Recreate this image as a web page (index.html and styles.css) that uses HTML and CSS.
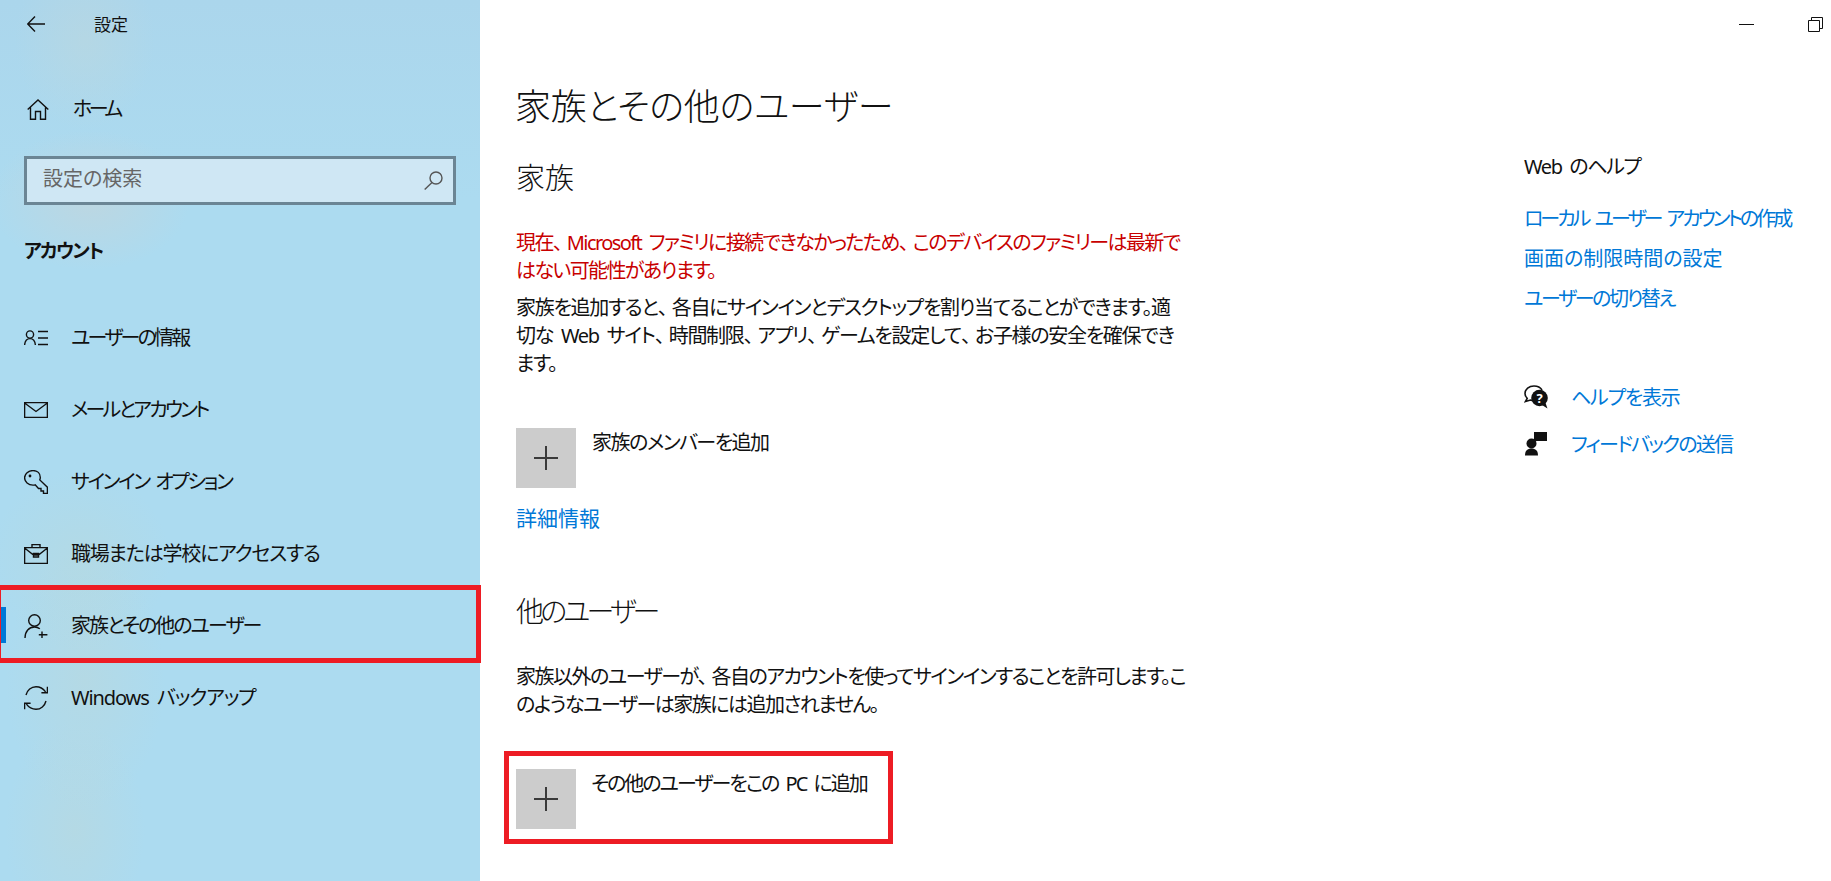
FILE: index.html
```html
<!DOCTYPE html>
<html lang="ja">
<head>
    <meta charset="UTF-8">
    <title>設定</title>
    <link rel="stylesheet" href="styles.css">
</head>
<body>
<div class="app">
    <aside class="sidebar">
        <div class="top-bar">
            <svg class="back-icon" viewBox="0 0 18 16"><path d="M8 0.5 L0.7 8 L8 15.5 M0.7 8 H18"/></svg>
            <span class="app-title">設定</span>
        </div>

        <div class="home-row">
            <svg class="home-icon" viewBox="0 0 22 21"><path d="M0.7 10.5 L11 1 L21.3 10.5 M3.5 8.5 V20.2 H8.5 V12.5 H13.5 V20.2 H18.5 V8.5"/></svg>
            <span class="nav-text ls-35">ホーム</span>
        </div>

        <div class="search-box">
            <span class="search-placeholder">設定の検索</span>
            <svg class="search-icon" viewBox="0 0 19 19"><circle cx="12" cy="7" r="6"/><path d="M8 11.5 L0.7 18.5"/></svg>
        </div>

        <h2 class="group-title">アカウント</h2>

        <!-- メニュー -->
        <nav class="nav-list">
            <div class="nav-item">
                <svg class="nav-icon" viewBox="0 0 24 24"><circle cx="6" cy="8.5" r="3.6"/><path d="M0.6 19 C1 14.5 3 12.6 6 12.6 C9 12.6 11 14.5 11.4 19 M14 5.5 H24 M14 12 H24 M14 18.5 H24"/></svg>
                <span class="nav-text ls-28">ユーザーの情報</span>
            </div>
            <div class="nav-item">
                <svg class="nav-icon" viewBox="0 0 24 24"><path d="M0.6 4.6 H23.4 V19.4 H0.6 Z M0.6 5 L12 13.5 L23.4 5"/></svg>
                <span class="nav-text ls-28">メールとアカウント</span>
            </div>
            <div class="nav-item">
                <svg class="nav-icon" viewBox="0 0 24 24"><path d="M9 0.6 C13.5 0.6 16.3 3.5 16.3 7.5 C16.3 8.4 16.1 9.2 15.8 9.9 L23.4 17.2 V23.4 H19.5 V21 H17 V18.5 H14.5 L11.2 14.8 C10.5 15 9.8 15.1 9 15.1 C4.3 15.1 0.6 12 0.6 7.8 C0.6 3.8 4.4 0.6 9 0.6 Z"/><circle class="icon-dot" cx="6" cy="6" r="1.4"/></svg>
                <span class="nav-text ls-24">サインイン オプション</span>
            </div>
            <div class="nav-item">
                <svg class="nav-icon" viewBox="0 0 24 24"><path d="M0.6 5.6 H23.4 V21.4 H0.6 Z M8 5.5 V2.6 H16 V5.5 M0.6 6 L9.5 13 H14.5 L23.4 6 M9.5 11.5 H14.5 V15 H9.5 Z"/></svg>
                <span class="nav-text ls-12">職場または学校にアクセスする</span>
            </div>
            <div class="nav-item nav-item-active">
                <svg class="nav-icon" viewBox="0 0 24 24"><circle cx="10.5" cy="6.5" r="5.8"/><path d="M1 24 C1 17.5 5 13 10.5 13 C12.5 13 14.3 13.6 15.8 14.8 M18 17.5 V24 M14.8 20.8 H23.4"/></svg>
                <span class="nav-text ls-20">家族とその他のユーザー</span>
            </div>
            <div class="nav-item">
                <svg class="nav-icon" viewBox="0 0 24 24"><path d="M2 9 C3.2 4.2 7.2 0.7 12 0.7 C15.8 0.7 19.4 2.8 21.6 5.8 M23.4 0.8 V6.8 H17.4 M22 15 C20.8 19.8 16.8 23.3 12 23.3 C8.2 23.3 4.6 21.2 2.4 18.2 M0.6 23.2 V17.2 H6.6"/></svg>
                <span class="nav-text ls-11">Windows バックアップ</span>
            </div>
        </nav>
    </aside>

    <main class="main">
        <div class="window-bar">
            <span class="win-min"></span>
            <svg class="win-restore" viewBox="0 0 15 15"><path d="M3.5 3 V0.5 H14.5 V11.5 H12 M0.5 3.5 H11.5 V14.5 H0.5 Z"/></svg>
        </div>

        <div class="main-body">
            <div class="content">
                <h1 class="page-title">家族とその他のユーザー</h1>

                <h2 class="section-title">家族</h2>
                <p class="warning">現在<span class="ten">、</span>Microsoft ファミリに接続できなかったため<span class="ten">、</span>このデバイスのファミリーは最新で<br>はない可能性があります。</p>
                <p class="desc">家族を追加すると<span class="ten">、</span>各自にサインインとデスクトップを割り当てることができます。適<br>切な Web サイト<span class="ten">、</span>時間制限<span class="ten">、</span>アプリ<span class="ten">、</span>ゲームを設定して<span class="ten">、</span>お子様の安全を確保でき<br>ます。</p>

                <div class="add-row add-family">
                    <div class="add-tile"><svg class="plus-icon" viewBox="0 0 24 24"><path d="M12 0 V24 M0 12 H24"/></svg></div>
                    <span class="add-label">家族のメンバーを追加</span>
                </div>
                <a class="more-link">詳細情報</a>

                <h2 class="section-title other-users">他のユーザー</h2>
                <p class="desc desc-other">家族以外のユーザーが<span class="ten">、</span>各自のアカウントを使ってサインインすることを許可します。こ<br>のようなユーザーは家族には追加されません。</p>

                <div class="add-row add-other">
                    <div class="add-tile"><svg class="plus-icon" viewBox="0 0 24 24"><path d="M12 0 V24 M0 12 H24"/></svg></div>
                    <span class="add-label">その他のユーザーをこの PC に追加</span>
                </div>
            </div>

            <aside class="help-rail">
                <h3 class="help-title">Web のヘルプ</h3>
                <a class="help-link ls-30">ローカル ユーザー アカウントの作成</a>
                <a class="help-link">画面の制限時間の設定</a>
                <a class="help-link ls-24">ユーザーの切り替え</a>

                <div class="help-actions">
                    <div class="help-action">
                        <svg class="action-icon" viewBox="0 0 24 24"><path class="outline" d="M10 1 C5 1 1 4 1 8.5 C1 10.5 2 12.2 3.2 13.3 L1.5 16.5 L6.5 15 C7 15.2 7.6 15.3 8.2 15.4"/><path class="outline" d="M10 1 C13.5 1 16.5 2.5 18 5"/><circle class="solid" cx="15.5" cy="13" r="8.3"/><path class="solid" d="M18 20 L23.5 23.5 L21.5 18 Z"/><text class="action-q" x="15.5" y="17.6" text-anchor="middle">?</text></svg>
                        <a class="action-link ls-12">ヘルプを表示</a>
                    </div>
                    <div class="help-action">
                        <svg class="action-icon" viewBox="0 0 24 24"><rect class="solid" x="10" y="0" width="13" height="9"/><path class="solid" d="M10 8 L7.5 12 L14 8 Z"/><circle class="solid" cx="7.5" cy="11.5" r="5"/><path class="solid" d="M1 23.5 C1 18.5 3.5 16.5 7.5 16.5 C11.5 16.5 14 18.5 14 23.5 Z"/></svg>
                        <a class="action-link ls-18">フィードバックの送信</a>
                    </div>
                </div>
            </aside>
        </div>
    </main>
</div>
</body>
</html>
```

FILE: styles.css
```css
html, body {
    margin: 0;
    padding: 0;
    height: 100%;
}

body {
    font-family: "Noto Sans", "Noto Sans CJK JP", sans-serif;
    font-feature-settings: "palt";
    font-size: 20px;
    word-spacing: 4px;
    color: #111;
    background-color: white;
    overflow: hidden;
}

h1, h2, h3, p {
    margin: 0;
    font-weight: normal;
}

svg {
    fill: none;
    stroke: #111;
    stroke-width: 1.4;
    flex-shrink: 0;
}

/* 字詰め (Yu Gothic UI のかなは狭い) */
.ls-11 { letter-spacing: -1.1px; }
.ls-12 { letter-spacing: -1.2px; }
.ls-18 { letter-spacing: -1.8px; }
.ls-20 { letter-spacing: -2px; }
.ls-24 { letter-spacing: -2.4px; }
.ls-28 { letter-spacing: -2.8px; }
.ls-30 { letter-spacing: -3px; }
.ls-35 { letter-spacing: -3.5px; }

.ten {
    font-feature-settings: normal;
    letter-spacing: -6px;
}

.app {
    display: flex;
    height: 881px;
}

/* サイドバー */
.sidebar {
    width: 480px;
    flex-shrink: 0;
    background-color: #acdbf0;
    background-image:
        radial-gradient(ellipse 70px 90px at 85px 40px, rgba(190, 215, 220, 0.5), transparent),
        radial-gradient(ellipse 100px 70px at 90px 200px, rgba(205, 210, 210, 0.5), transparent),
        radial-gradient(ellipse 90px 90px at 80px 560px, rgba(190, 215, 210, 0.35), transparent),
        radial-gradient(ellipse 80px 130px at 85px 680px, rgba(190, 215, 215, 0.45), transparent),
        radial-gradient(ellipse 70px 110px at 75px 830px, rgba(190, 215, 215, 0.45), transparent),
        linear-gradient(180deg, #abd6ec 0, #acdbf0 200px);
}

.top-bar {
    display: flex;
    align-items: center;
    height: 48px;
    padding-left: 27px;
}

.back-icon {
    width: 18px;
    height: 16px;
}

.app-title {
    margin-left: 49px;
    padding-bottom: 2px;
    font-size: 17px;
}

.home-row {
    display: flex;
    align-items: center;
    height: 48px;
    margin-top: 37px;
    padding-left: 27px;
    gap: 24px;
}

.home-icon {
    width: 22px;
    height: 21px;
}

.search-box {
    display: flex;
    align-items: center;
    justify-content: space-between;
    box-sizing: border-box;
    height: 49px;
    margin: 23px 24px 0;
    padding: 0 10px 0 16px;
    background-color: #cfe7f4;
    border: 3px solid #6b8594;
}

.search-placeholder {
    padding-bottom: 6px;
    font-size: 20px;
    color: #666;
}

.search-icon {
    width: 19px;
    height: 19px;
    stroke: #555;
}

.group-title {
    height: 40px;
    line-height: 40px;
    margin: 26px 0 0 24px;
    font-size: 19px;
    font-weight: bold;
    letter-spacing: -1.6px;
}

.nav-list {
    margin-top: 31px;
}

.nav-item {
    position: relative;
    display: flex;
    align-items: center;
    gap: 23px;
    height: 72px;
    padding-left: 24px;
}

.nav-text {
    padding-bottom: 4px;
}

.nav-icon {
    width: 24px;
    height: 24px;
}

.icon-dot {
    fill: #111;
    stroke: none;
}

/* 選択中の項目 */
.nav-item-active::before {
    content: "";
    position: absolute;
    left: 1px;
    top: 17px;
    width: 5px;
    height: 36px;
    background-color: #0078d7;
}

.nav-item-active::after {
    content: "";
    position: absolute;
    left: 0;
    top: -5px;
    width: 481px;
    height: 78px;
    box-sizing: border-box;
    border: 5px solid #ed1c24;
    border-left-width: 1px;
}

/* メイン */
.main {
    flex: 1;
    min-width: 0;
}

.window-bar {
    display: flex;
    align-items: center;
    justify-content: flex-end;
    gap: 54px;
    height: 48px;
    padding-right: 8px;
}

.win-min {
    width: 15px;
    height: 1px;
    background-color: #111;
}

.win-restore {
    width: 15px;
    height: 15px;
    stroke-width: 1;
}

.main-body {
    display: flex;
    justify-content: space-between;
    padding: 32px 0 0 36px;
}

.page-title {
    margin-left: -1px;
    padding-top: 2px;
    font-size: 36px;
    line-height: 50px;
    font-weight: 300;
    letter-spacing: -0.2px;
}

.section-title {
    font-size: 29px;
    line-height: 40px;
    margin-top: 26px;
    font-weight: 300;
}

.other-users {
    margin-top: 59px;
    font-size: 28px;
    letter-spacing: -3.9px;
}

.warning,
.desc {
    line-height: 28px;
    white-space: nowrap;
}

.warning {
    margin-top: 31px;
    color: #c80000;
    letter-spacing: -1.6px;
}

.desc {
    margin-top: 9px;
    letter-spacing: -1.3px;
}

.desc-other {
    margin-top: 32px;
    letter-spacing: -1.5px;
}

.add-row {
    position: relative;
    display: flex;
    gap: 16px;
    margin-top: 50px;
}

.add-tile {
    display: flex;
    align-items: center;
    justify-content: center;
    width: 60px;
    height: 60px;
    background-color: #cccccc;
}

.plus-icon {
    width: 24px;
    height: 24px;
    stroke: #3a3a3a;
    stroke-width: 2;
    shape-rendering: crispEdges;
}

.add-label {
    line-height: 28px;
    margin-top: 1px;
    letter-spacing: -1.5px;
}

.add-other {
    gap: 15px;
}

.add-other .add-label {
    letter-spacing: -2px;
}

/* 赤枠 */
.add-other::after {
    content: "";
    position: absolute;
    left: -12px;
    top: -18px;
    width: 389px;
    height: 93px;
    box-sizing: border-box;
    border: 5px solid #ed1c24;
}

.more-link {
    display: block;
    margin-top: 16px;
    font-size: 21px;
    line-height: 28px;
    color: #0078d7;
}

/* 右側のヘルプ */
.help-rail {
    width: 307px;
    flex-shrink: 0;
    padding-top: 73px;
}

.help-title {
    font-size: 20px;
    line-height: 28px;
    margin-bottom: 18px;
    letter-spacing: -1.4px;
}

.help-link {
    display: block;
    height: 40px;
    line-height: 40px;
    color: #0078d7;
    white-space: nowrap;
}

.help-actions {
    margin-top: 54px;
}

.help-action {
    display: flex;
    align-items: center;
    gap: 23px;
    height: 47px;
}

.action-icon {
    width: 24px;
    height: 24px;
}

.action-icon .solid {
    fill: #111;
    stroke: none;
}

.action-icon .outline {
    stroke-width: 1.6;
}

.action-q {
    font-size: 13px;
    font-weight: bold;
    fill: white;
    stroke: none;
}

.action-link {
    color: #0078d7;
}
```
